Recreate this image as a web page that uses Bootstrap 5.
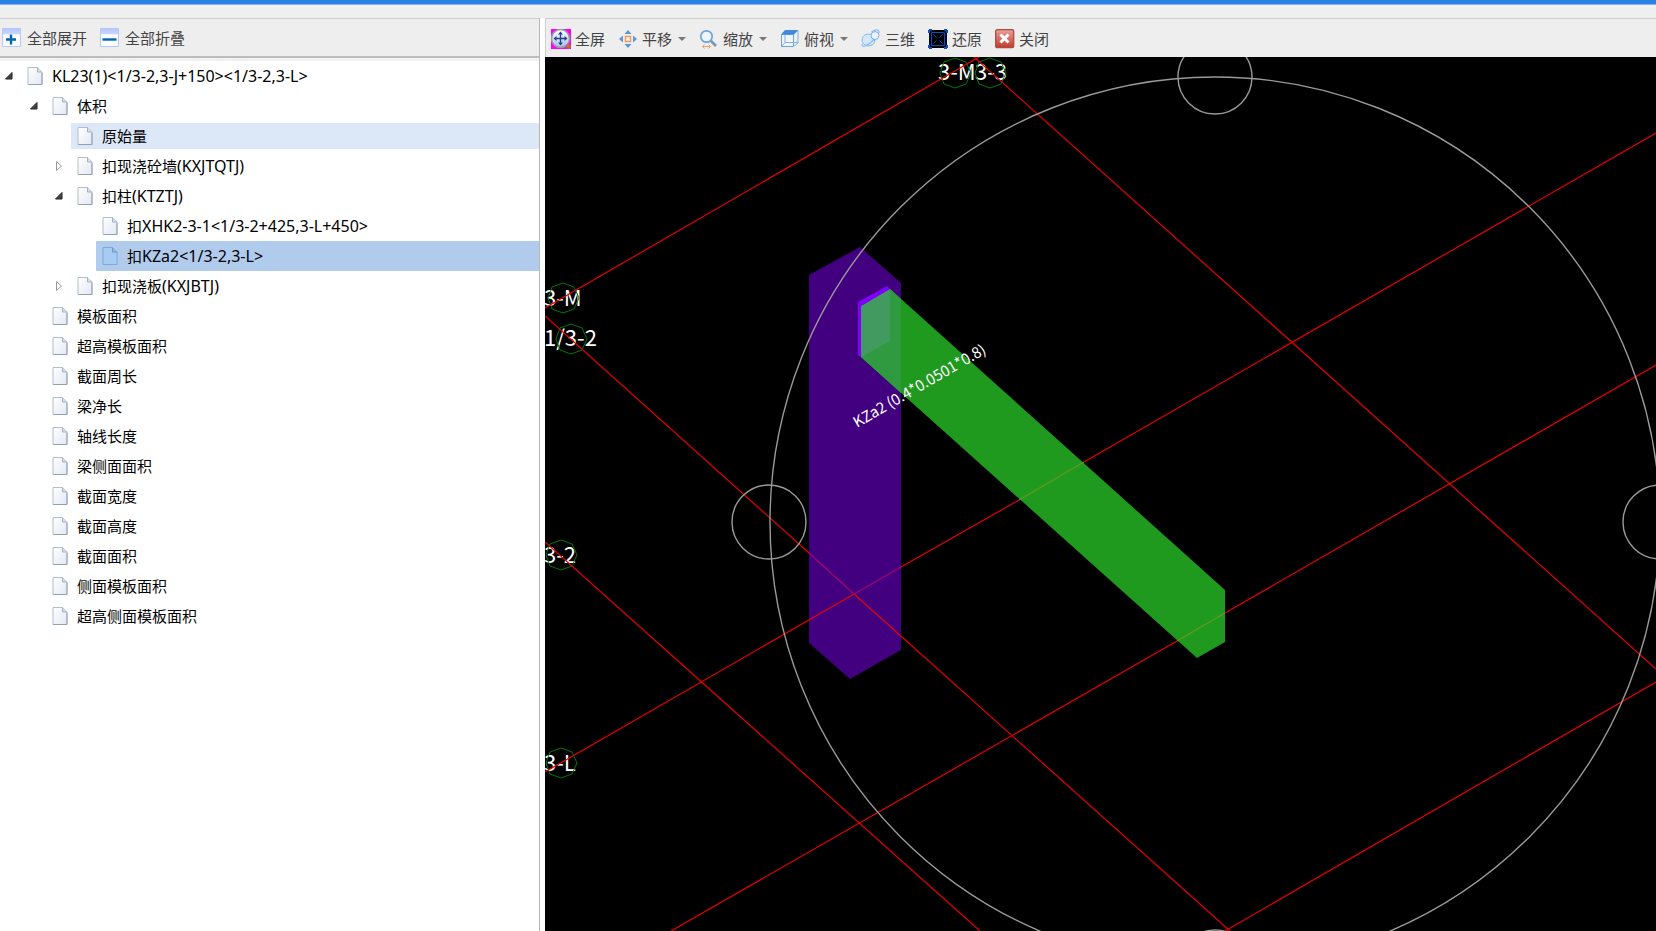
<!DOCTYPE html>
<html lang="zh-CN">
<head>
<meta charset="utf-8">
<meta name="viewport" content="width=device-width, initial-scale=1">
<title>KL23(1)</title>
<link href="https://cdn.jsdelivr.net/npm/bootstrap@5.3.0/dist/css/bootstrap.min.css" rel="stylesheet">
<style>
body { font-family: "Noto Sans CJK SC", sans-serif; font-size: 15px; line-height: 20px; color: #000; }
.title-strip { height: 18px; background: #efefef; border-top: 4px solid #2b80e3; box-shadow: inset 0 1px #7fb2ee; }
.side-panel { flex: 0 0 540px; border-right: 1px solid #b5b8ba; }
.view-panel { margin-left: 5px; }
.tool-strip { height: 39px; background: #eee; border-top: 1px solid #d0d0d0; gap: 13px; color: #444; padding-top: 1px; }
.side-panel .tool-strip { height: 40px; padding-left: 2px; border-bottom: 2px solid #bbbdbf; }
.view-panel .tool-strip { padding-left: 5px; border-left: 1px solid #d0d0d0; }
.tool-btn { display: flex; align-items: center; gap: 4px; padding: 0; border: 0; background: none; color: inherit; white-space: nowrap; }
.side-panel .tool-btn { gap: 5px; }
.tool-btn svg { width: 20px; height: 20px; }
.tool-btn.dropdown-toggle::after { margin: 0 0 0 2px; border-width: 4px 4px 0; border-color: #777 transparent transparent; border-style: solid; }
.tree-box { border-top: 3px solid #f2f2f2; }
.tree-box ul ul { padding-left: 25px; }
.tree-row { display: flex; height: 30px; }
.twisty { width: 21px; padding: 0 0 0 4px; border: 0; background: none; display: flex; align-items: center; flex: none; }
.twisty svg { width: 10px; height: 12px; }
.node { flex: 1; display: flex; align-items: center; gap: 9px; padding-left: 6px; color: #000; text-decoration: none; white-space: nowrap; }
.node svg { width: 16px; height: 20px; flex: none; }
.node.hovered { background: #dce8f8; margin: 2px 0; }
.node.selected { background: #b1cbed; }
.latin { font-family: "Noto Sans", sans-serif; font-size: 16px; }
.scene { background: #000; min-height: 0; }
.scene svg { font-family: "Noto Sans CJK SC", sans-serif; }
</style>
</head>
<body class="vh-100 d-flex flex-column overflow-hidden bg-white">
<svg width="0" height="0" class="position-absolute" aria-hidden="true">
  <defs>
    <linearGradient id="paper" x1="0" y1="0" x2="1" y2="1"><stop offset="0" stop-color="#fff"/><stop offset="1" stop-color="#e3e8f3"/></linearGradient>
    <linearGradient id="boxTop" x1="0" y1="0" x2="0" y2="1"><stop offset="0" stop-color="#b4c4fb"/><stop offset=".3" stop-color="#c9d5ff"/><stop offset=".34" stop-color="#fafcff"/></linearGradient>
    <linearGradient id="ball" x1="0" y1="0" x2="0" y2="1"><stop offset="0" stop-color="#fff"/><stop offset="1" stop-color="#a4c1ee"/></linearGradient>
    <linearGradient id="redBox" x1="0" y1="0" x2="0" y2="1"><stop offset="0" stop-color="#e9a199"/><stop offset="1" stop-color="#c33a2c"/></linearGradient>
    <symbol id="file" viewBox="0 0 16 20"><path d="M1 1.5h9.5L15 6v12.500H1z" fill="url(#paper)" stroke="#b3bdcc"/><path d="M10.500 1.500V6H15" fill="#d9e0ec" stroke="#a3afc2"/><path d="M1.500 18.500H15V7" fill="none" stroke="#93a0b4"/></symbol>
    <symbol id="file-sel" viewBox="0 0 16 20"><path d="M1 1.500h9.500L15 6v12.500H1z" fill="#a5cdf3" stroke="#7fa8d3"/><path d="M10.500 1.500V6H15" fill="#8ebbe8" stroke="#6c9aca"/></symbol>
    <symbol id="open" viewBox="0 0 10 12"><path d="M8 2.500v6.500H1.500z" fill="#444" stroke="#222"/></symbol>
    <symbol id="shut" viewBox="0 0 10 12"><path d="M2.500 1.500l5 4.500-5 4.500z" fill="#fff" stroke="#999"/></symbol>
  </defs>
</svg>
<header class="title-strip flex-shrink-0"></header>
<div class="d-flex flex-grow-1 overflow-hidden">
  <aside class="side-panel d-flex flex-column">
    <div class="tool-strip d-flex align-items-center flex-shrink-0" role="toolbar">
      <button type="button" class="tool-btn"><svg viewBox="0 0 20 20"><path d="M.5.500h18v18H.5z" fill="url(#boxTop)" stroke="#b7c7f8"/><path d="M4 11.500h10M9 6.500v10" stroke="#0067ae" stroke-width="2.400"/></svg>全部展开</button>
      <button type="button" class="tool-btn"><svg viewBox="0 0 20 20"><path d="M.5.500h18v18H.5z" fill="url(#boxTop)" stroke="#b7c7f8"/><path d="M2.500 11.500h14" stroke="#0067ae" stroke-width="2.400"/></svg>全部折叠</button>
    </div>
    <nav class="tree-box flex-grow-1 overflow-hidden">
      <ul class="list-unstyled m-0">
        <li><div class="tree-row"><button type="button" class="twisty" aria-label="折叠"><svg><use href="#open"/></svg></button><a href="#" class="node"><svg><use href="#file"/></svg><span class="latin">KL23(1)&lt;1/3-2,3-J+150&gt;&lt;1/3-2,3-L&gt;</span></a></div>
          <ul class="list-unstyled">
            <li><div class="tree-row"><button type="button" class="twisty" aria-label="折叠"><svg><use href="#open"/></svg></button><a href="#" class="node"><svg><use href="#file"/></svg>体积</a></div>
              <ul class="list-unstyled">
                <li><div class="tree-row"><span class="twisty"></span><a href="#" class="node hovered"><svg><use href="#file"/></svg>原始量</a></div></li>
                <li><div class="tree-row"><button type="button" class="twisty" aria-label="展开"><svg><use href="#shut"/></svg></button><a href="#" class="node"><svg><use href="#file"/></svg><span>扣现浇砼墙<span class="latin">(KXJTQTJ)</span></span></a></div></li>
                <li><div class="tree-row"><button type="button" class="twisty" aria-label="折叠"><svg><use href="#open"/></svg></button><a href="#" class="node"><svg><use href="#file"/></svg><span>扣柱<span class="latin">(KTZTJ)</span></span></a></div>
                  <ul class="list-unstyled">
                    <li><div class="tree-row"><span class="twisty"></span><a href="#" class="node"><svg><use href="#file"/></svg><span>扣<span class="latin">XHK2-3-1&lt;1/3-2+425,3-L+450&gt;</span></span></a></div></li>
                    <li><div class="tree-row"><span class="twisty"></span><a href="#" class="node selected" aria-current="true"><svg><use href="#file-sel"/></svg><span>扣<span class="latin">KZa2&lt;1/3-2,3-L&gt;</span></span></a></div></li>
                  </ul>
                </li>
                <li><div class="tree-row"><button type="button" class="twisty" aria-label="展开"><svg><use href="#shut"/></svg></button><a href="#" class="node"><svg><use href="#file"/></svg><span>扣现浇板<span class="latin">(KXJBTJ)</span></span></a></div></li>
              </ul>
            </li>
            <li><div class="tree-row"><span class="twisty"></span><a href="#" class="node"><svg><use href="#file"/></svg>模板面积</a></div></li>
            <li><div class="tree-row"><span class="twisty"></span><a href="#" class="node"><svg><use href="#file"/></svg>超高模板面积</a></div></li>
            <li><div class="tree-row"><span class="twisty"></span><a href="#" class="node"><svg><use href="#file"/></svg>截面周长</a></div></li>
            <li><div class="tree-row"><span class="twisty"></span><a href="#" class="node"><svg><use href="#file"/></svg>梁净长</a></div></li>
            <li><div class="tree-row"><span class="twisty"></span><a href="#" class="node"><svg><use href="#file"/></svg>轴线长度</a></div></li>
            <li><div class="tree-row"><span class="twisty"></span><a href="#" class="node"><svg><use href="#file"/></svg>梁侧面面积</a></div></li>
            <li><div class="tree-row"><span class="twisty"></span><a href="#" class="node"><svg><use href="#file"/></svg>截面宽度</a></div></li>
            <li><div class="tree-row"><span class="twisty"></span><a href="#" class="node"><svg><use href="#file"/></svg>截面高度</a></div></li>
            <li><div class="tree-row"><span class="twisty"></span><a href="#" class="node"><svg><use href="#file"/></svg>截面面积</a></div></li>
            <li><div class="tree-row"><span class="twisty"></span><a href="#" class="node"><svg><use href="#file"/></svg>侧面模板面积</a></div></li>
            <li><div class="tree-row"><span class="twisty"></span><a href="#" class="node"><svg><use href="#file"/></svg>超高侧面模板面积</a></div></li>
          </ul>
        </li>
      </ul>
    </nav>
  </aside>
  <main class="view-panel d-flex flex-column flex-grow-1 overflow-hidden">
    <div class="tool-strip d-flex align-items-center flex-shrink-0" role="toolbar">
      <button type="button" class="tool-btn"><svg viewBox="0 0 20 20"><path fill="#f0f" d="M0 0h20v20H0z"/><circle cx="9.500" cy="9.500" r="9" fill="url(#ball)" stroke="#999" stroke-width="1.500"/><path d="M9.500 4v11M4 9.500h11" stroke="#26408a" stroke-width="1.300"/><path d="M9.500 2.500l2.500 3h-5zM9.500 16.500l2.500-3h-5zM2.500 9.500l3-2.500v5zM16.500 9.500l-3-2.500v5z" fill="#26408a"/><path d="M15 17.500h5M17.500 15v5" stroke="#b4722b" stroke-width="2"/></svg>全屏</button>
      <button type="button" class="tool-btn dropdown-toggle"><svg viewBox="0 0 20 20"><path d="M10 1l3.500 4h-7zM10 19l3.500-4h-7zM1 10l4-3.500v7zM19 10l-4-3.500v7z" fill="#5b98d6"/><path d="M7.500 7.500h5v5h-5z" fill="#fff5ed" stroke="#f09a62" stroke-width="1.400"/></svg>平移</button>
      <button type="button" class="tool-btn dropdown-toggle"><svg viewBox="0 0 20 20"><circle cx="7.500" cy="7.500" r="5.700" fill="#eef5fc" stroke="#6ba4dc" stroke-width="1.700"/><path d="M12 12l5 5" stroke="#8095a9" stroke-width="2.600"/><path d="M3.500 17.500h8M5.500 15.500l-2 2 2 2M9.500 15.500l2 2-2 2" stroke="#f0a273" fill="none"/></svg>缩放</button>
      <button type="button" class="tool-btn dropdown-toggle"><svg viewBox="0 0 20 20"><path d="M1.500 5.500h12v12h-12z" fill="#f1f5fa" stroke="#6ba1dd"/><path d="M1 5.500L5 1h13.500L14 5.500z" fill="#3f8adb"/><path d="M18 1.500V14l-4.500 3.500M5 5.500v8h13M5 13.500l-3.500 4" fill="none" stroke="#83b1e5"/></svg>俯视</button>
      <button type="button" class="tool-btn"><svg viewBox="0 0 20 20"><ellipse cx="7.500" cy="11" rx="6.500" ry="6" fill="#d5e8fb" stroke="#86b8ec"/><path d="M1.500 15c-2 4 5 2 10-3 6-5 8-10 5-11-2-.5-4 .500-6 2" fill="none" stroke="#91bef0" stroke-width="1.300"/><circle cx="14" cy="6.500" r="4" fill="#eaf4ff" stroke="#7cb0e9"/><path d="M10 8l4 4" stroke="#7cb0e9"/></svg>三维</button>
      <button type="button" class="tool-btn"><svg viewBox="0 0 20 20"><path fill="#000" stroke="#0752c8" stroke-width="2" stroke-dasharray="3 12 3 0" d="M1 1h18v18H1z"/><rect x="3.500" y="3.500" width="13" height="13" rx="1" fill="none" stroke="#0d4fc0" stroke-width="1.200"/><path d="M5.500 5.500l3 3M14.500 5.500l-3 3M5.500 14.500l3-3M14.500 14.500l-3-3" stroke="#1250b5"/></svg>还原</button>
      <button type="button" class="tool-btn"><svg viewBox="0 0 20 20"><rect x=".7" y=".7" width="18" height="18" rx="1.500" fill="url(#redBox)" stroke="#a94c43" stroke-width="1.300"/><path d="M5.500 5.500l8 8M13.500 5.500l-8 8" stroke="#fff" stroke-width="3"/></svg>关闭</button>
    </div>
    <div class="scene flex-grow-1">
      <svg class="d-block w-100 h-100" viewBox="545 57 1111 874" preserveAspectRatio="xMinYMin slice">
        <!-- solids: column, beam and their intersection -->
        <path d="M809 275L860 247L901 283V650L850 679L809 643z" fill="#420080"/>
        <path d="M861 306L890 289L1225 590V642L1197 658L861 357z" fill="#20991f"/>
        <path d="M861 306L890 289L901 299V393L861 357z" fill="#309a40"/>
        <path d="M861 306L890 289V341L861 357z" fill="#429a60"/>
        <path d="M858 302L887 286L890 289L861 306V357L858 355z" fill="#8000ff"/>
        <!-- axis labels -->
        <g fill="#fff" font-size="22">
          <text x="938" y="80">3-M</text><text x="975" y="80">3-3</text>
          <text x="544" y="306">3-M</text><text x="544" y="346">1/3-2</text>
          <text x="544" y="563">3-2</text><text x="544" y="771">3-L</text>
        </g>
        <g fill="none" stroke="#007a08">
          <path id="bubble" d="M955 58l11 4 5 11-5 11-11 4-11-4-4-11 4-11z"/>
          <use href="#bubble" x="35"/><use href="#bubble" x="-392" y="225"/><use href="#bubble" x="-384" y="266"/>
          <use href="#bubble" x="-394" y="482"/><use href="#bubble" x="-394" y="690"/>
        </g>
        <!-- axis grid; stretches seen through a solid are muted -->
        <g stroke="#e60000" stroke-width="1.200" fill="none">
          <path d="M545 308L979 57M545 772L854 594M901 567L1019 500M1084 462L1656 133"/>
          <path d="M671 931L1177 641M1225 613L1656 365M1225 931L1656 682"/>
          <path d="M974 57L1656 669M545 316L809 553M854 594L1230 931M545 542L980 931"/>
        </g>
        <g stroke-width="1.200" fill="none">
          <path d="M809 553L854 594L901 567" stroke="#a8006c"/>
          <path d="M1019 500L1084 462M1177 641L1225 613" stroke="#619a1f"/>
        </g>
        <!-- orbit ring and its handles -->
        <g stroke="#999" stroke-width="1.400" fill="none">
          <circle cx="1215" cy="522" r="445"/>
          <circle cx="1215" cy="77" r="37"/><circle cx="769" cy="522" r="37"/>
          <circle cx="1660" cy="522" r="37"/><circle cx="1215" cy="967" r="37"/>
        </g>
        <text transform="translate(857 428) rotate(-30)" fill="#fff" font-size="15">KZa2 (0.4*0.0501*0.8)</text>
      </svg>
    </div>
  </main>
</div>
<script src="https://cdn.jsdelivr.net/npm/bootstrap@5.3.0/dist/js/bootstrap.bundle.min.js"></script>
</body>
</html>
